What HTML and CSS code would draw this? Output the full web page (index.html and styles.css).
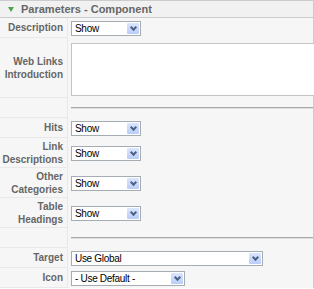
FILE: index.html
```html
<!DOCTYPE html>
<html lang="en">
<head>
    <meta charset="UTF-8">
    <meta name="viewport" content="width=device-width, initial-scale=1.0">
    <title>Parameters - Component</title>
    <link rel="stylesheet" href="styles.css">
</head>
<body>
    <div class="panel">
        <h3 class="panel-title"><span class="toggler"></span>Parameters - Component</h3>

        <div class="param">
            <div class="key">Description</div>
            <div class="value"><div class="select"><span>Show</span><i></i></div></div>
        </div>

        <div class="param param-text">
            <div class="key">Web Links<br>Introduction</div>
            <div class="value"><textarea class="intro"></textarea></div>
        </div>

        <div class="param">
            <div class="key"></div>
            <div class="value"><div class="spacer"></div></div>
        </div>

        <div class="param">
            <div class="key">Hits</div>
            <div class="value"><div class="select"><span>Show</span><i></i></div></div>
        </div>

        <div class="param param-tall">
            <div class="key">Link<br>Descriptions</div>
            <div class="value"><div class="select"><span>Show</span><i></i></div></div>
        </div>

        <div class="param param-tall">
            <div class="key">Other<br>Categories</div>
            <div class="value"><div class="select"><span>Show</span><i></i></div></div>
        </div>

        <div class="param param-tall">
            <div class="key">Table<br>Headings</div>
            <div class="value"><div class="select"><span>Show</span><i></i></div></div>
        </div>

        <div class="param">
            <div class="key"></div>
            <div class="value"><div class="spacer"></div></div>
        </div>

        <div class="param">
            <div class="key">Target</div>
            <div class="value"><div class="select select-wide"><span>Use Global</span><i></i></div></div>
        </div>

        <div class="param">
            <div class="key">Icon</div>
            <div class="value"><div class="select select-mid"><span>- Use Default -</span><i></i></div></div>
        </div>
    </div>
</body>
</html>
```

FILE: styles.css
```css
html, body {
    margin: 0;
    padding: 0;
    overflow: hidden;
    background: #fff;
}

body {
    font-family: 'Liberation Sans', Arial, sans-serif;
    font-size: 10px;
    color: #666;
}

.panel {
    width: 314px;
    box-sizing: border-box;
    border-top: 1px solid #ccc;
    border-right: 1px solid #ccc;
    background: #f6f6f6;
}

.panel-title {
    margin: 0;
    height: 16px;
    line-height: 16px;
    padding-left: 21px;
    position: relative;
    background: #f1f1f1;
    border-bottom: 1px solid #ccc;
    font-size: 11px;
    font-weight: bold;
    color: #666;
}

/* green arrow of the slider */
.toggler {
    position: absolute;
    left: 8px;
    top: 6px;
    width: 0;
    height: 0;
    border-left: 3px solid transparent;
    border-right: 3px solid transparent;
    border-top: 5px solid #4aa84a;
}

.param {
    display: flex;
    height: 20px;
}

.param-tall {
    height: 30px;
}

.param-text {
    height: 60px;
}

.key {
    width: 68px;
    flex: none;
    box-sizing: border-box;
    display: flex;
    align-items: center;
    justify-content: flex-end;
    text-align: right;
    padding-right: 4px;
    line-height: 13px;
    font-weight: bold;
    color: #666;
    border-right: 1px solid #e9e9e9;
    border-bottom: 1px solid #e9e9e9;
}

.value {
    flex: 1;
    min-width: 0;
    display: flex;
    align-items: center;
    padding-left: 3px;
}

.select {
    width: 70px;
    height: 15px;
    box-sizing: border-box;
    display: flex;
    align-items: center;
    background: #fff;
    border: 1px solid #a5acb2;
    color: #000;
    font-size: 10px;
    letter-spacing: -0.3px;
}

.select span {
    flex: 1;
    padding-left: 3px;
    white-space: nowrap;
}

.select i {
    width: 12px;
    height: 11px;
    margin-right: 1px;
    border-radius: 1px;
    background: linear-gradient(#dbe6fe, #b9cdf7);
    position: relative;
}

/* chevron inside the drop button */
.select i::after {
    content: '';
    position: absolute;
    left: 4px;
    top: 2px;
    width: 3px;
    height: 3px;
    border-right: 2px solid #4d6185;
    border-bottom: 2px solid #4d6185;
    transform: rotate(45deg);
}

.select-wide {
    width: 192px;
}

.select-mid {
    width: 114px;
}

/* runs over the panel's right edge, as in the shot */
.intro {
    flex: none;
    width: 243px;
    height: 53px;
    margin: 2px -1px 0 0;
    padding: 0;
    box-sizing: border-box;
    border: 1px solid #c4c4c4;
    border-right: none;
    background: #fff;
    resize: none;
}

.spacer {
    width: 100%;
    height: 0;
    border-top: 1px solid #a8a8a8;
    border-bottom: 1px solid #e0e0e0;
}
```
